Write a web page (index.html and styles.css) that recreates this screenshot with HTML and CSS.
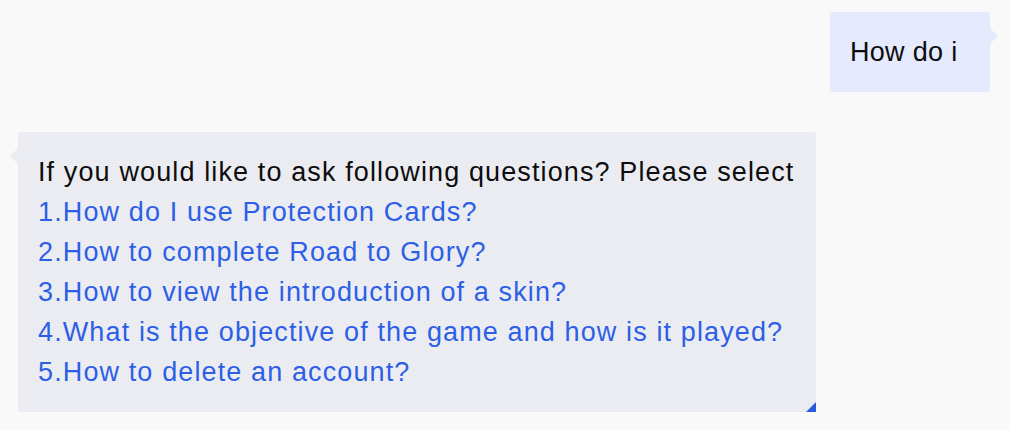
FILE: index.html
```html
<!DOCTYPE html>
<html>
<head>
<meta charset="utf-8">
<link rel="stylesheet" href="styles.css">
</head>
<body>
<div class="chat">
  <div class="row row-user">
    <div class="bubble bubble-user">How do i</div>
  </div>
  <div class="row row-bot">
    <div class="bubble bubble-bot">
      <div class="line">If you would like to ask following questions? Please select</div>
      <div class="line link">1.How do I use Protection Cards?</div>
      <div class="line link">2.How to complete Road to Glory?</div>
      <div class="line link">3.How to view the introduction of a skin?</div>
      <div class="line link">4.What is the objective of the game and how is it played?</div>
      <div class="line link">5.How to delete an account?</div>
      <span class="corner"></span>
    </div>
  </div>
</div>
</body>
</html>
```
FILE: styles.css
```css
html, body {
  margin: 0;
  padding: 0;
  background: #f9f9f9;
}
body {
  font-family: "Liberation Sans", "Noto Sans", sans-serif;
  font-size: 27px;
  letter-spacing: 1.12px;
  color: #0d0d0d;
}
.chat {
  display: flex;
  flex-direction: column;
  gap: 40px;
  padding: 12px 20px 0 18px;
}
.row {
  display: flex;
}
.row-user {
  justify-content: flex-end;
}
.bubble {
  position: relative;
  border-radius: 2px;
}
.bubble-user {
  background: #e5eaff;
  height: 80px;
  display: flex;
  align-items: center;
  padding: 0 20px 0 20px;
  box-sizing: border-box;
  width: 160px;
  letter-spacing: 0.3px;
}
.bubble-user::after {
  content: "";
  position: absolute;
  right: -8px;
  top: 16px;
  border-left: 8px solid #e5eaff;
  border-top: 8px solid transparent;
  border-bottom: 8px solid transparent;
}
.bubble-bot {
  background: #ebecf2;
  padding: 20px 22px 20px 20px;
}
.bubble-bot::before {
  content: "";
  position: absolute;
  left: -8px;
  top: 16px;
  border-right: 8px solid #ebecf2;
  border-top: 8px solid transparent;
  border-bottom: 8px solid transparent;
}
.line {
  line-height: 40px;
  white-space: nowrap;
}
.link {
  color: #2d5fe6;
}
.corner {
  position: absolute;
  right: 0;
  bottom: 0;
  width: 0;
  height: 0;
  border-left: 10px solid transparent;
  border-bottom: 10px solid #2a5ae0;
}
```
